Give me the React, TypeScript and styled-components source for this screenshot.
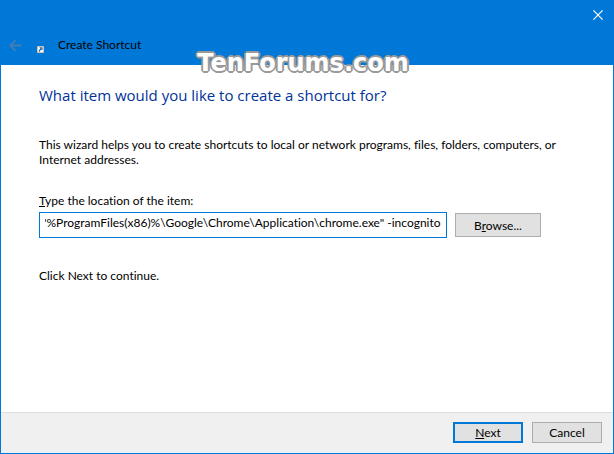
import React, { useLayoutEffect, useRef, useState } from "react";
import styled, { createGlobalStyle } from "styled-components";

const GlobalStyle = createGlobalStyle`
  *, *::before, *::after { box-sizing: border-box; }
  body {
    margin: 0;
    color: #000;
    background: #fff;
    font-family: Lato, "Open Sans", sans-serif;
    font-size: 12px;
    font-variant-ligatures: none;
    line-height: 15px;
  }
`;

const Window = styled.main`
  display: flex;
  flex-direction: column;
  min-height: 100vh;
  border: 1px solid #0078d7;
  border-top: 0;
  background: #fff;
`;

const TitleBar = styled.header`
  position: relative;
  display: flex;
  flex-direction: column;
  height: 65px;
  background: #0078d7;
`;

const CloseButton = styled.button`
  display: flex;
  align-items: center;
  justify-content: center;
  align-self: flex-end;
  width: 30px;
  height: 30px;
  padding: 0;
  border: 0;
  background: transparent;
`;

const Caption = styled.div`
  display: flex;
  align-items: center;
  height: 30px;
  padding-left: 8px;
`;

const BackButton = styled.button`
  display: flex;
  width: 13px;
  height: 13px;
  margin-right: 15px;
  padding: 0;
  border: 0;
  background: transparent;
`;

const ShortcutIcon = styled.svg`
  margin: 8px 14px 0 0;
`;

const WindowTitle = styled.span`
  line-height: 16px;
`;

const Watermark = styled.div`
  position: absolute;
  top: 47px;
  left: 0;
  right: 8px;
  text-align: center;
  font-family: "DejaVu Sans", sans-serif;
  font-size: 24px;
  font-weight: 700;
  line-height: 32px;
  color: #fff;
  -webkit-text-stroke: 1px #fff;
  text-shadow: 2px 0 #999, -2px 0 #999, 0 2px #999, 0 -2px #999, 1px 1px #999, -1px -1px #999, 1px -1px #999,
    -1px 1px #999;
  paint-order: stroke fill;
  pointer-events: none;
`;

const Content = styled.section`
  flex: 1;
  padding: 19px 38px;
`;

const Heading = styled.h1`
  margin: 0 0 31px;
  color: #003399;
  font-family: "Open Sans", "Noto Sans", sans-serif;
  font-size: 15px;
  font-weight: 400;
  line-height: 22px;
`;

const Paragraph = styled.p`
  margin: 0;
`;

const Field = styled.div`
  margin: 26px 0 30px;
`;

const FieldLabel = styled.label`
  display: block;
  margin-bottom: 4px;
`;

const FieldRow = styled.div`
  display: flex;
  align-items: center;
  gap: 8px;
  padding-right: 34px;
`;

const PathInput = styled.input`
  flex: 1;
  min-width: 0;
  height: 26px;
  padding: 0 5px 6px 5px;
  border: 1px solid #0078d7;
  outline: 0;
  background: #fff;
  color: #000;
  font: inherit;
  font-variant-ligatures: none;
`;

const PushButton = styled.button<{ $primary?: boolean; $wide?: boolean }>`
  width: ${(p) => (p.$wide ? 86 : 70)}px;
  height: ${(p) => (p.$wide ? 24 : 21)}px;
  padding: 0;
  border: ${(p) => (p.$primary ? "2px solid #0078d7" : "1px solid #adadad")};
  background: #e1e1e1;
  color: #000;
  font: inherit;
`;

const Footer = styled.footer`
  display: flex;
  justify-content: flex-end;
  gap: 9px;
  padding: 9px 11px 10px;
  border-top: 1px solid #dfdfdf;
  background: #f0f0f0;
`;

export default function App() {
  const inputRef = useRef<HTMLInputElement>(null);
  const [path, setPath] = useState(
    '"%ProgramFiles(x86)%\\Google\\Chrome\\Application\\chrome.exe" -incognito'
  );

  // Keep the end of a long command line in view.
  useLayoutEffect(() => {
    const input = inputRef.current;
    if (!input) return;
    const showEnd = () => {
      input.scrollLeft = input.scrollWidth;
    };
    showEnd();
    document.fonts.ready.then(showEnd);
  }, []);

  return (
    <>
      <GlobalStyle />
      <Window>
        <TitleBar>
          <CloseButton type="button" aria-label="Close">
            <svg width="10" height="10" viewBox="0 0 10 10" fill="none" stroke="#fff" strokeWidth="1.2">
              <path d="M0.4 0.4 9.6 9.6M9.6 0.4 0.4 9.6" />
            </svg>
          </CloseButton>
          <Caption>
            <BackButton type="button" aria-label="Back" disabled>
              <svg width="13" height="13" viewBox="0 0 13 13" fill="none" stroke="#3f80b4" strokeWidth="1.8">
                <path d="M12.5 6.5H1.5M6.5 1.2 1.2 6.5 6.5 11.8" />
              </svg>
            </BackButton>
            <ShortcutIcon width="7" height="7" viewBox="0 0 7 7">
              <rect width="7" height="7" fill="#a7a39c" />
              <rect x="0.6" y="0.6" width="5.8" height="5.8" fill="#f6f8fb" />
              <path d="M2.3 1.3H5.5V4.5L4.5 3.5Q3 4.2 2.8 5.8H1.7Q1.6 3.8 3.4 2.4Z" fill="#2c65b0" />
            </ShortcutIcon>
            <WindowTitle>Create Shortcut</WindowTitle>
          </Caption>
          <Watermark>TenForums.com</Watermark>
        </TitleBar>
        <Content>
          <Heading>What item would you like to create a shortcut for?</Heading>
          <Paragraph>
            This wizard helps you to create shortcuts to local or network programs, files, folders, computers, or
            Internet addresses.
          </Paragraph>
          <Field>
            <FieldLabel htmlFor="location">
              <u>T</u>ype the location of the item:
            </FieldLabel>
            <FieldRow>
              <PathInput
                id="location"
                ref={inputRef}
                type="text"
                spellCheck={false}
                value={path}
                onChange={(e) => setPath(e.target.value)}
              />
              <PushButton type="button" $wide>
                B<u>r</u>owse...
              </PushButton>
            </FieldRow>
          </Field>
          <Paragraph>Click Next to continue.</Paragraph>
        </Content>
        <Footer>
          <PushButton type="button" $primary>
            <u>N</u>ext
          </PushButton>
          <PushButton type="button">Cancel</PushButton>
        </Footer>
      </Window>
    </>
  );
}
